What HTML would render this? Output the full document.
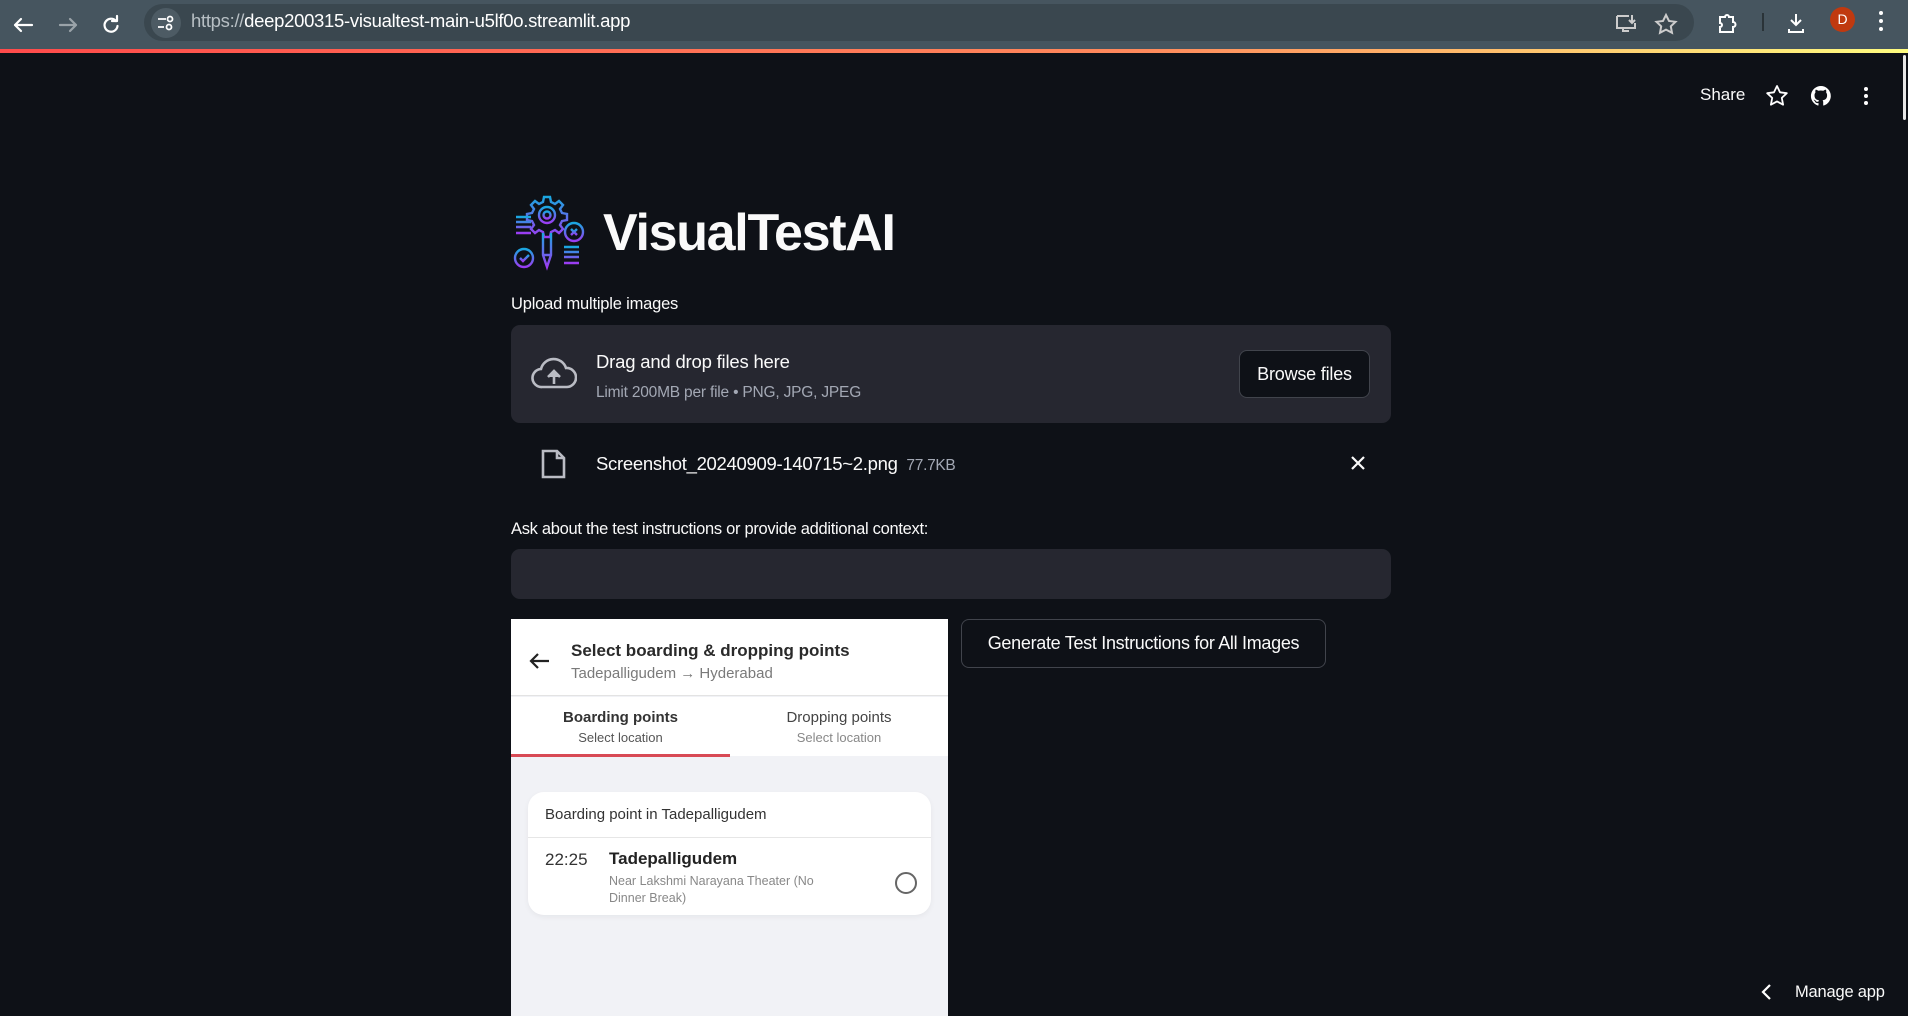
<!DOCTYPE html>
<html><head><meta charset="utf-8"><style>
*{margin:0;padding:0;box-sizing:border-box}
body{width:1908px;height:1016px;overflow:hidden;background:#0e1117;font-family:"Liberation Sans",sans-serif;color:#fafafa;position:relative}
.a{position:absolute;white-space:nowrap}
.top{position:absolute;left:0;top:0;width:1908px;height:50px;background:#46555f}
.grad{position:absolute;left:0;top:49px;width:1908px;height:4px;background:linear-gradient(90deg,#ff4b4b,#ff8a5c 60%,#fffd80)}
.pill{position:absolute;left:144px;top:4px;width:1550px;height:37px;border-radius:19px;background:#3a474f}
</style></head><body>
<div class="top"></div><div class="grad"></div>
<div class="pill"></div>
<svg class="a" style="left:4px;top:10px" width="140" height="30" viewBox="0 0 140 30" fill="none" stroke-width="2.2" stroke-linecap="round" stroke-linejoin="round">
<path d="M28 15H11M11 15l6-6M11 15l6 6" stroke="#fff"/>
<path d="M56 15h16M72 15l-6-6M72 15l-6 6" stroke="#9aa3a9"/>
<path d="M112 11a6.5 6.5 0 1 0 1.5 5" stroke="#fff"/><path d="M113 6v5h-5" stroke="#fff"/>
</svg>
<div class="a" style="left:151px;top:8px;width:30px;height:30px;border-radius:50%;background:#4d5b64"></div>
<svg class="a" style="left:157px;top:14px" width="18" height="18" viewBox="0 0 18 18" fill="none" stroke="#fff" stroke-width="1.8"><path d="M1 5h8M1 13h6"/><circle cx="13" cy="5" r="2.5"/><circle cx="12" cy="13" r="2.5"/></svg>
<div class="a" style="left:191px;top:10px;font-size:18.5px;color:#fff;letter-spacing:-0.3px"><span style="color:#b7bfc4">https://</span>deep200315-visualtest-main-u5lf0o.streamlit.app</div>
<svg class="a" style="left:1612px;top:9px" width="290" height="32" viewBox="0 0 290 32" fill="none" stroke="#fff" stroke-width="2">
<path d="M5 7h12M5 7v12h18v-5M11 19v3h6" stroke="#ccc"/><path d="M20 6v8M17 11l3 3 3-3" stroke="#ccc"/>
<path d="M54 6l3 6 6.5.8-4.7 4.5 1.2 6.5L54 20.6 48 23.8l1.2-6.5-4.7-4.5 6.5-.8z" stroke="#ccc"/>
<path d="M108 8h5a2 2 0 0 1 4 0h4v5a2 2 0 0 1 0 5v5h-13v-5a2 2 0 0 0 0-4z"/>
<path d="M151 4v18" stroke="#2a3338"/>
<path d="M184 5v11M179 11l5 5 5-5M177 20v3h14v-3"/>
</svg>
<div class="a" style="left:1830px;top:7px;width:25px;height:25px;border-radius:50%;background:#c0390f;color:#fff;font-size:14px;text-align:center;line-height:25px">D</div>
<div class="a" style="left:1879px;top:11px;width:4px;height:4px;border-radius:50%;background:#fff;box-shadow:0 8px #fff,0 16px #fff"></div>

<div class="a" style="left:1700px;top:85px;font-size:17px">Share</div>
<svg class="a" style="left:1764px;top:83px" width="120" height="26" viewBox="0 0 120 26" fill="none" stroke="#fff" stroke-width="1.8" stroke-linejoin="round">
<path d="M13 3l3 6.3 6.8.9-5 4.7 1.3 6.8L13 18.4 6.9 21.7l1.3-6.8-5-4.7 6.8-.9z"/>
<path d="M57 3a10 10 0 0 0-3.2 19.5c.5.1.7-.2.7-.5v-2c-2.8.6-3.4-1.2-3.4-1.2-.5-1.1-1.1-1.5-1.1-1.5-.9-.6.1-.6.1-.6 1 .1 1.5 1 1.5 1 .9 1.5 2.3 1.1 2.9.8.1-.6.3-1.100.6-1.3-2.2-.3-4.6-1.1-4.6-5 0-1.1.4-2 1-2.7-.1-.3-.4-1.3.1-2.7 0 0 .8-.3 2.7 1a9.4 9.4 0 0 1 5 0c1.9-1.3 2.7-1 2.7-1 .5 1.4.2 2.4.1 2.7.6.7 1 1.6 1 2.7 0 3.9-2.4 4.7-4.6 5 .4.3.7.9.7 1.9V22c0 .3.2.6.7.5A10 10 0 0 0 57 3z" fill="#fff" stroke="none"/>
</svg>
<div class="a" style="left:1864px;top:87px;width:4px;height:4px;border-radius:50%;background:#fff;box-shadow:0 7px #fff,0 14px #fff"></div>
<div class="a" style="left:1903px;top:55px;width:3px;height:65px;background:#e6e6e6;border-radius:2px"></div>

<svg class="a" style="left:510px;top:195px" width="76" height="76" viewBox="0 0 76 76" fill="none" stroke-width="2.4">
<defs><linearGradient id="g" x1="0" y1="0" x2="0" y2="1"><stop offset="0" stop-color="#1aa7e0"/><stop offset="1" stop-color="#9b3cf2"/></linearGradient></defs>
<g stroke="url(#g)">
<path d="M34 2h6l1 5 4 2 4-3 4 4-3 4 2 4 5 1v6l-5 1-2 4 3 4-4 4-4-3-4 2-1 5h-6l-1-5-4-2-4 3-4-4 3-4-2-4-5-1v-6l5-1 2-4-3-4 4-4 4 3 4-2z"/>
<circle cx="37" cy="20" r="8"/><circle cx="37" cy="20" r="3.5"/>
<path d="M33 38v22l4 12 4-12V38M33 60h8"/>
<circle cx="64" cy="37" r="9"/><path d="M61 34l6 6M67 34l-6 6"/>
<circle cx="14" cy="63" r="9"/><path d="M10 63l3 3 6-6"/>
<path d="M6 22h15M6 27h15M6 32h15M6 38h15" /><path d="M54 52h15M54 57h15M54 62h15M54 68h15"/>
</g></svg>
<div class="a" style="left:603px;top:203px;font-size:52px;font-weight:bold;letter-spacing:-1.3px">VisualTestAI</div>

<div class="a" style="left:511px;top:295px;font-size:16.5px;letter-spacing:-0.2px">Upload multiple images</div>
<div class="a" style="left:511px;top:325px;width:880px;height:98px;background:#262730;border-radius:9px"></div>
<svg class="a" style="left:531px;top:357px" width="46" height="34" viewBox="0 0 46 34" fill="none" stroke="#babcc4" stroke-width="2.6"><path d="M11 30a9 9 0 0 1-1-18 13 13 0 0 1 25-1 9.5 9.5 0 0 1 1 19z"/><path d="M23 27v-10M17 20l6-6 6 6" fill="#babcc4"/></svg>
<div class="a" style="left:596px;top:351px;font-size:18.5px;letter-spacing:-0.2px">Drag and drop files here</div>
<div class="a" style="left:596px;top:384px;font-size:15.5px;color:#a3a8b4;letter-spacing:-0.2px">Limit 200MB per file • PNG, JPG, JPEG</div>
<div class="a" style="left:1239px;top:350px;width:131px;height:48px;border:1px solid #41444c;border-radius:8px;background:#0e1117;font-size:18px;text-align:center;line-height:46px;letter-spacing:-0.2px">Browse files</div>

<svg class="a" style="left:541px;top:449px" width="26" height="30" viewBox="0 0 26 30" fill="none" stroke="#babcc4" stroke-width="2.6"><path d="M2 2h14l7 7v19H2z M16 2v7h7"/></svg>
<div class="a" style="left:596px;top:453px;font-size:18.5px;letter-spacing:-0.3px">Screenshot_20240909-140715~2.png <span style="font-size:15.5px;color:#a3a8b4">&nbsp;77.7KB</span></div>
<svg class="a" style="left:1350px;top:455px" width="16" height="16" viewBox="0 0 16 16" stroke="#fafafa" stroke-width="2.2"><path d="M2 2l12 12M14 2L2 14"/></svg>

<div class="a" style="left:511px;top:520px;font-size:16.5px;letter-spacing:-0.3px">Ask about the test instructions or provide additional context:</div>
<div class="a" style="left:511px;top:549px;width:880px;height:50px;background:#262730;border-radius:9px"></div>

<div class="a" style="left:511px;top:619px;width:437px;height:397px;background:#f1f2f6;overflow:hidden">
 <div class="a" style="left:0;top:0;width:437px;height:77px;background:#fff;border-bottom:1px solid #e3e3e3"></div>
 <svg class="a" style="left:18px;top:33px" width="22" height="18" viewBox="0 0 22 18" stroke="#222" stroke-width="2.2" fill="none"><path d="M20 9H3M9 2L2 9l7 7"/></svg>
 <div class="a" style="left:60px;top:22px;font-size:17px;font-weight:bold;color:#2a2a2a">Select boarding &amp; dropping points</div>
 <div class="a" style="left:60px;top:46px;font-size:15px;color:#7a7a7a">Tadepalligudem → Hyderabad</div>
 <div class="a" style="left:0;top:78px;width:437px;height:59px;background:#fff"></div>
 <div class="a" style="left:0;top:90px;width:219px;text-align:center;font-size:15px;font-weight:bold;color:#333">Boarding points</div>
 <div class="a" style="left:0;top:111px;width:219px;text-align:center;font-size:13px;color:#555">Select location</div>
 <div class="a" style="left:219px;top:90px;width:218px;text-align:center;font-size:15px;color:#444">Dropping points</div>
 <div class="a" style="left:219px;top:111px;width:218px;text-align:center;font-size:13px;color:#888">Select location</div>
 <div class="a" style="left:0;top:135px;width:219px;height:3px;background:#d84a55"></div>
 <div class="a" style="left:17px;top:173px;width:403px;height:123px;background:#fff;border-radius:16px;box-shadow:0 2px 6px rgba(0,0,0,.05)"></div>
 <div class="a" style="left:34px;top:187px;font-size:15px;color:#333">Boarding point in Tadepalligudem</div>
 <div class="a" style="left:17px;top:218px;width:403px;height:1px;background:#e6e6e6"></div>
 <div class="a" style="left:34px;top:231px;font-size:17px;color:#333">22:25</div>
 <div class="a" style="left:98px;top:230px;font-size:17px;font-weight:bold;color:#222">Tadepalligudem</div>
 <div class="a" style="left:98px;top:254px;font-size:12.5px;color:#888;line-height:17px">Near Lakshmi Narayana Theater (No<br>Dinner Break)</div>
 <div class="a" style="left:384px;top:253px;width:22px;height:22px;border:2px solid #666;border-radius:50%"></div>
</div>

<div class="a" style="left:961px;top:619px;width:365px;height:49px;border:1px solid #41444c;border-radius:8px;font-size:18px;text-align:center;line-height:47px;letter-spacing:-0.3px">Generate Test Instructions for All Images</div>

<svg class="a" style="left:1760px;top:983px" width="14" height="18" viewBox="0 0 14 18" stroke="#fff" stroke-width="2.2" fill="none"><path d="M10 2L3 9l7 7"/></svg>
<div class="a" style="left:1795px;top:983px;font-size:16.5px;letter-spacing:-0.2px">Manage app</div>
</body></html>
